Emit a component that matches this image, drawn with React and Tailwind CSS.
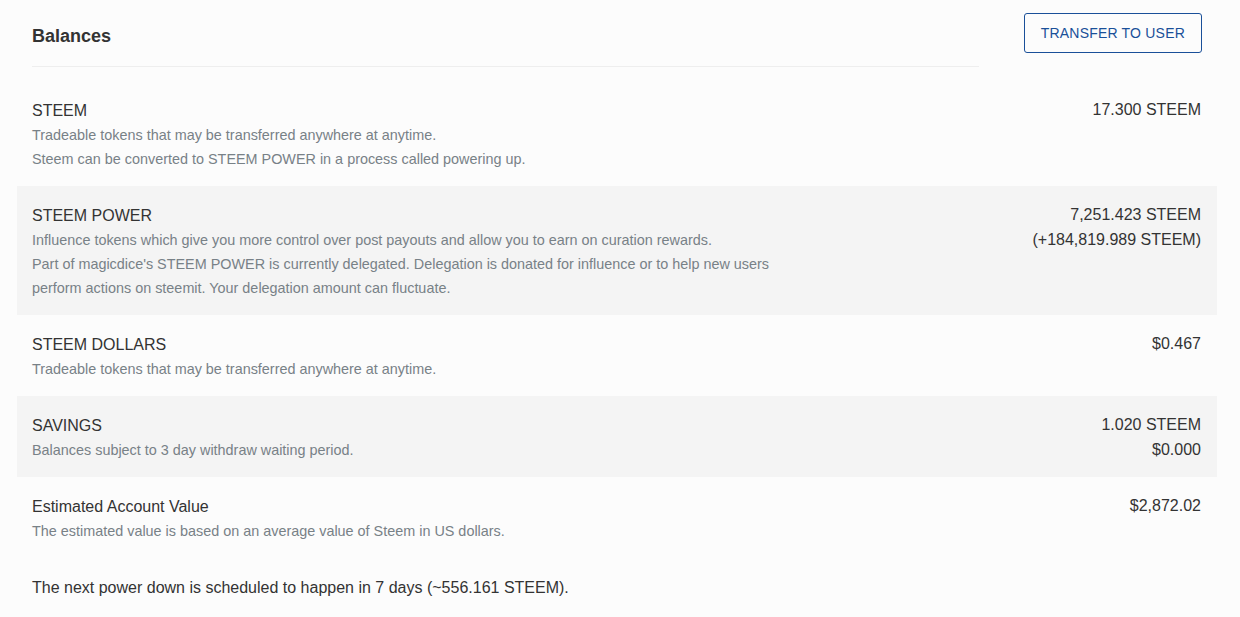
import React from 'react';

const rows = [
  {
    label: 'STEEM',
    desc: [
      'Tradeable tokens that may be transferred anywhere at anytime.',
      'Steem can be converted to STEEM POWER in a process called powering up.',
    ],
    values: ['17.300 STEEM'],
  },
  {
    label: 'STEEM POWER',
    desc: [
      'Influence tokens which give you more control over post payouts and allow you to earn on curation rewards.',
      "Part of magicdice's STEEM POWER is currently delegated. Delegation is donated for influence or to help new users perform actions on steemit. Your delegation amount can fluctuate.",
    ],
    values: ['7,251.423 STEEM', '(+184,819.989 STEEM)'],
    shaded: true,
  },
  {
    label: 'STEEM DOLLARS',
    desc: ['Tradeable tokens that may be transferred anywhere at anytime.'],
    values: ['$0.467'],
  },
  {
    label: 'SAVINGS',
    desc: ['Balances subject to 3 day withdraw waiting period.'],
    values: ['1.020 STEEM', '$0.000'],
    shaded: true,
  },
  {
    label: 'Estimated Account Value',
    desc: ['The estimated value is based on an average value of Steem in US dollars.'],
    values: ['$2,872.02'],
  },
];

const BalanceRow = ({ label, desc, values, shaded }) => (
  <div className={`flex justify-between pl-[15px] pr-4 pt-[17px] pb-[15px] ${shaded ? 'bg-[#f4f4f4]' : ''}`}>
    <div className="w-[770px]">
      <div className="text-base leading-[25px] text-[#333]">{label}</div>
      {desc.map((line) => (
        <div key={line} className="text-[14.4px] leading-6 text-[#788187]">
          {line}
        </div>
      ))}
    </div>
    <div className="text-right">
      {values.map((v) => (
        <div key={v} className="text-base leading-[24.5px] text-[#333]">
          {v}
        </div>
      ))}
    </div>
  </div>
);

export default function App() {
  return (
    <div
      className="min-h-[617px] bg-[#fcfcfc] px-[17px] antialiased"
      style={{ fontFamily: '"Liberation Sans", Arial, sans-serif' }}
    >
      <div className="w-[1200px]">
        <div className="flex justify-between">
          <div className="w-[977px] px-[15px]">
            <h2 className="pt-6 pb-[18px] text-[18px] leading-6 font-bold text-[#333] border-b border-[#eeeeee]">
              Balances
            </h2>
          </div>
          <div className="pr-[15px]">
            <button className="mt-[13px] h-10 px-4 border border-[#1a5099] rounded-[3px] text-sm uppercase text-[#1a5099] tracking-[0.2px] bg-transparent">
              Transfer to User
            </button>
          </div>
        </div>

        <div className="mt-[14px]">
          {rows.map((row) => (
            <BalanceRow key={row.label} {...row} />
          ))}
        </div>

        <p className="mt-[18px] px-[15px] text-base leading-6 text-[#333]">
          The next power down is scheduled to happen in 7 days (~556.161 STEEM).
        </p>
      </div>
    </div>
  );
}
